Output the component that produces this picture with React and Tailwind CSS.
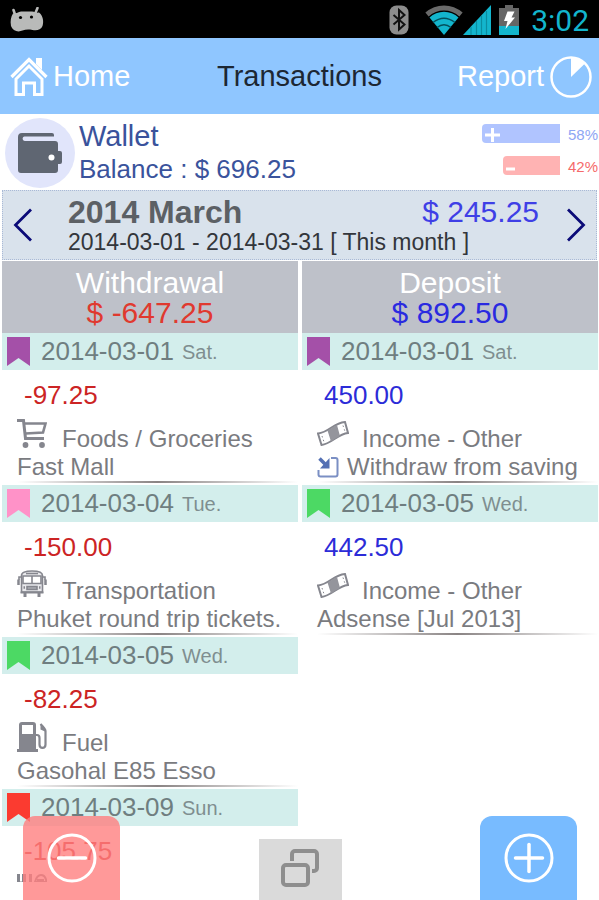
import clsx from 'clsx';

const wallet = {
    name: 'Wallet',
    balance: '$ 696.25',
    income: 58,
    expense: 42,
};

const columns = [
    {
        title: 'Withdrawal',
        total: '$ -647.25',
        totalClass: 'text-[#e0392f]',
        amountClass: 'text-[#cc2424]',
        items: [
            { date: '2014-03-01', day: 'Sat.', flag: '#a450a8', amount: '-97.25', icon: CartIcon, category: 'Foods / Groceries', note: 'Fast Mall' },
            { date: '2014-03-04', day: 'Tue.', flag: '#ff92c8', amount: '-150.00', icon: BusIcon, category: 'Transportation', note: 'Phuket round trip tickets.' },
            { date: '2014-03-05', day: 'Wed.', flag: '#4cd964', amount: '-82.25', icon: FuelIcon, category: 'Fuel', note: 'Gasohal E85 Esso' },
            { date: '2014-03-09', day: 'Sun.', flag: '#fb3b30', amount: '-105.75', icon: DiningIcon },
        ],
    },
    {
        title: 'Deposit',
        total: '$ 892.50',
        totalClass: 'text-[#2a2ae0]',
        amountClass: 'text-[#2c2cd8]',
        items: [
            { date: '2014-03-01', day: 'Sat.', flag: '#a450a8', amount: '450.00', icon: CashIcon, category: 'Income - Other', note: 'Withdraw from saving', transfer: true },
            { date: '2014-03-05', day: 'Wed.', flag: '#4cd964', amount: '442.50', icon: CashIcon, category: 'Income - Other', note: 'Adsense [Jul 2013]' },
        ],
    },
];

/* Icons */

function AndroidIcon() {
    return (
        <svg viewBox="0 0 34 26" className="h-[26px] w-[34px]" fill="#b9bab9">
            <path d="M3.500 3l2 6M27.500 1l-2.500 6" stroke="#b9bab9" strokeWidth="2.600" strokeLinecap="round" />
            <path d="M3 6.500c3 .5 5-1.500 8-2h11c3 .5 5 1.500 7 1 4 3 5 9 3.500 13.500-1.500 4-6 5-10 4-4-.8-7-.6-10 .6C8 25.500 2.500 24 1 19 0 14 1 9.500 3 6.500z" />
            <circle cx="10.500" cy="10.500" r="1.600" fill="#000" />
            <circle cx="21.500" cy="10" r="1.600" fill="#000" />
        </svg>
    );
}

function BluetoothIcon() {
    return (
        <svg viewBox="0 0 20 30" className="h-[30px] w-5">
            <rect x="0.500" y="0.500" width="19" height="29" rx="7" fill="#8d8d8d" />
            <path d="M4.500 10l11 9.500-5.500 5V5l5.500 5-11 9.500" fill="none" stroke="#111" strokeWidth="2" />
        </svg>
    );
}

function WifiIcon() {
    return (
        <svg viewBox="0 0 38 30" className="h-[30px] w-[38px]" fill="none">
            <path d="M2 9.500C12 .8 26 .8 36 9.500" stroke="#6a6a6a" strokeWidth="5" />
            <path d="M4.500 12.500a21 21 0 0 1 29 0L19 30z" fill="#13b5cd" />
            <path d="M8 17.500c7-5.500 15-5.500 22 0M12 22.500c4.500-3.500 9.500-3.500 14 0" stroke="#04505c" strokeWidth="1.500" />
        </svg>
    );
}

function SignalIcon() {
    return (
        <svg viewBox="0 0 28 30" className="h-[30px] w-7">
            <path d="M28 0v30H0z" fill="#13b5cd" />
            <path d="M8 22v8M13.500 16v14M18.500 11v19M23.500 6v24" stroke="#0a8da0" strokeWidth="1.200" />
        </svg>
    );
}

function BatteryIcon() {
    return (
        <svg viewBox="0 0 20 30" className="h-[30px] w-5">
            <path d="M6 0h8v3h6v18H0V3h6z" fill="#666" />
            <path d="M0 21h20v9H0z" fill="#13b5cd" />
            <path d="M8.500 6.500h7l-3 6h3.500L6.500 24l2-8H5z" fill="#fff" />
        </svg>
    );
}

function HouseIcon() {
    return (
        <svg viewBox="0 0 38 40" className="h-10 w-[38px]" fill="none" stroke="#fff" strokeWidth="3">
            <path d="M1.500 20L19 2.500 36.500 20" strokeWidth="3.200" />
            <path d="M6 22L19 9l13 13v15.500h-7.500V26h-11v11.500H6z" />
            <path d="M26 1h6v12l-6-6z" fill="#fff" stroke="none" />
        </svg>
    );
}

function PieIcon() {
    return (
        <svg viewBox="0 0 42 42" className="size-[42px]">
            <circle cx="21" cy="21" r="19.500" fill="none" stroke="#fff" strokeWidth="2.500" />
            <path d="M21 21V2a19 19 0 0 1 14 5.500z" fill="#fff" />
        </svg>
    );
}

function WalletIcon() {
    return (
        <svg viewBox="0 0 46 42" className="h-[42px] w-[46px]">
            <path d="M5 1h30a2 2 0 0 1 2 2v1.500H7.500C5 4.500 5 9 8 9h30a3 3 0 0 1 3 3v7h2a2 2 0 0 1 2 2v9a2 2 0 0 1-2 2h-2v6a3 3 0 0 1-3 3H4a3 3 0 0 1-3-3V5a4 4 0 0 1 4-4z" fill="#5f6672" />
            <circle cx="34.500" cy="25.500" r="3" fill="#fff" />
        </svg>
    );
}

function BookmarkIcon({ color }) {
    return (
        <svg viewBox="0 0 23 29" className="h-[29px] w-[23px]">
            <path d="M0 0h23v29l-11.500-8L0 29z" fill={color} />
        </svg>
    );
}

function CartIcon() {
    return (
        <svg viewBox="0 0 30 30" className="size-[30px]" fill="none" stroke="#85868e">
            <path d="M0 2.500h6.500L8.500 20.500H27" strokeWidth="3" />
            <path d="M7 5.500h21.500L26 14.500 8.500 15.500" strokeWidth="2.600" />
            <circle cx="8.500" cy="27" r="2.900" fill="#85868e" stroke="none" />
            <circle cx="25" cy="27" r="2.900" fill="#85868e" stroke="none" />
        </svg>
    );
}

function BusIcon() {
    return (
        <svg viewBox="0 0 30 30" className="size-[30px]" fill="none" stroke="#85868e" strokeWidth="1.600">
            <path d="M4.500 22V5.500C4.500 2.500 8 1 15 1s10.500 1.500 10.500 4.500V22z" fill="#e9e9ec" />
            <path d="M6 6h18v7.500H6zM15 6v7.500" fill="#fff" />
            <path d="M9 3.500h12" />
            <path d="M10 16.500h10v3H10z" fill="#a9aab1" />
            <path d="M6.500 17.500H8M22 17.500h1.500" strokeWidth="2.500" />
            <path d="M3.500 22.500h23" strokeWidth="2" />
            <path d="M8 23v4M22 23v4" strokeWidth="3" />
            <path d="M4.500 7H2v3M25.500 7H28v3" />
            <path d="M1.500 9.500V15M28.500 9.500V15" strokeWidth="2.500" />
        </svg>
    );
}

function FuelIcon() {
    return (
        <svg viewBox="0 0 30 30" className="size-[30px]">
            <path fillRule="evenodd" d="M2 3a3 3 0 0 1 3-3h11a3 3 0 0 1 3 3v24h2v3H0v-3h2zM5 3v9h11V3z" fill="#85868e" />
            <path d="M19 13h1c2 0 2.500 1 2.500 3v6.500c0 4.500 6 4.500 6 0V9c0-2-1.500-3.500-5-7" fill="none" stroke="#85868e" strokeWidth="2.200" />
            <path d="M23.500 2v5.500l4.500 2V6.500z" fill="#85868e" />
        </svg>
    );
}

function DiningIcon() {
    return (
        <svg viewBox="0 0 30 30" className="size-[30px]" fill="none" stroke="#85868e" strokeWidth="3">
            <path d="M1.500 0v9h6V0M6.500 0v29M13.500 0v29" />
            <path d="M18 8c1-4 3-7 6-7s5 3 5.500 7zM20 6h7" strokeWidth="2" />
        </svg>
    );
}

function CashIcon() {
    return (
        <svg viewBox="0 0 32 30" className="h-[30px] w-8 shrink-0" fill="none" stroke="#85868e" strokeWidth="2">
            <path d="M1 15.500c5-.5 9-3 13.500-6S23 4.500 28 4l3 11c-5 .5-9 3-13.500 6S9 26.500 4.500 27z" />
            <path d="M10.500 12.500c3.500-2 6-4 9.500-5.500l3 11c-3 1.500-6 3.500-9 5.500z" fill="#94959c" stroke="none" />
            <path d="M5 18l2 6M26 7.500l2 6" strokeWidth="1" strokeDasharray="1.500 2.500" />
        </svg>
    );
}

function TransferIcon() {
    return (
        <svg viewBox="0 0 22 22" className="size-[22px] shrink-0" fill="none" stroke="#5470b4" strokeWidth="2">
            <path d="M14 2h4.500a2 2 0 0 1 2 2v14.500a2 2 0 0 1-2 2h-15a2 2 0 0 1-2-2V14" stroke="#7b8fc4" />
            <path d="M2.500 2.500l6 6" strokeWidth="3.500" />
            <path d="M12.500 2v10.500H3z" fill="#5470b4" stroke="none" />
        </svg>
    );
}

function ChevronIcon({ flip }) {
    return (
        <svg viewBox="0 0 20 34" className={clsx('h-[34px] w-5', flip && 'rotate-180')} fill="none">
            <path d="M18 1.500L2.500 17 18 32.500" stroke="#0b0b78" strokeWidth="2.800" />
        </svg>
    );
}

function WindowsIcon() {
    return (
        <svg viewBox="0 0 38 38" className="size-[38px]" fill="none" stroke="#8e8e8e" strokeWidth="4">
            <path d="M11 12V5a3 3 0 0 1 3-3h19a3 3 0 0 1 3 3v14a3 3 0 0 1-3 3h-2" />
            <rect x="2" y="16" width="25" height="20" rx="3" />
        </svg>
    );
}

function RoundIcon({ plus }) {
    return (
        <svg viewBox="0 0 50 50" className="size-[50px]" fill="none" stroke="#fff" strokeWidth="3.500" strokeLinecap="round">
            <circle cx="25" cy="25" r="23" strokeWidth="3" />
            <path d="M11.500 25h27" />
            {plus && <path d="M25 11.500v27" />}
        </svg>
    );
}

/* Sections */

const StatusBar = () => (
    <div className="flex h-[38px] shrink-0 items-center bg-black px-[10px] pt-[2px]">
        <AndroidIcon />
        <div className="ml-auto flex items-center">
            <BluetoothIcon />
            <div className="ml-4 flex items-center">
                <WifiIcon />
                <SignalIcon />
            </div>
            <div className="ml-2">
                <BatteryIcon />
            </div>
            <span className="ml-3 pt-[2px] font-['Roboto',sans-serif] text-[30px] leading-9 text-[#13b5cd]">3:02</span>
        </div>
    </div>
);

const Header = () => (
    <header className="grid h-[76px] shrink-0 grid-cols-[1fr_auto_1fr] items-center bg-[#8fc6ff] px-[7px] pt-[2px] text-[29px]">
        <a href="#home" className="flex items-center gap-[5px] justify-self-start pl-[3px] text-white">
            <HouseIcon />
            <span>Home</span>
        </a>
        <h1 className="text-[#1c2733]">Transactions</h1>
        <a href="#report" className="flex items-center gap-[6px] justify-self-end text-white">
            <span>Report</span>
            <PieIcon />
        </a>
    </header>
);

const RatioBar = ({ percent, sign, barClass, textClass }) => (
    <div className="flex items-center gap-2">
        <div className="flex w-[135px] justify-end">
            <div className={clsx('flex h-[19px] items-center rounded-l-sm pl-[3px]', barClass)} style={{ width: `${percent}%` }}>
                <svg viewBox="0 0 16 16" className="size-4" stroke="#fff" strokeWidth="3">
                    {sign === '+' ? <path d="M0 9h15M7.500 2v14" /> : <path d="M0 11h9" />}
                </svg>
            </div>
        </div>
        <span className={clsx('w-[30px] pt-[3px] text-[15px] leading-4', textClass)}>{percent}%</span>
    </div>
);

const WalletSummary = () => (
    <section className="flex h-[76px] shrink-0 items-center pt-[2px] pr-px pl-[5px] text-[#3a539c]">
        <div className="flex size-[70px] items-center justify-center rounded-full bg-[#e1e5fb]">
            <WalletIcon />
        </div>
        <div className="ml-1 flex-1 leading-[33px]">
            <h2 className="text-[29px]">{wallet.name}</h2>
            <p className="text-[26px]">Balance : {wallet.balance}</p>
        </div>
        <div className="flex flex-col gap-[13px] pb-[7px]">
            <RatioBar percent={wallet.income} sign="+" barClass="bg-[#b0c4ff]" textClass="text-[#8ea6f4]" />
            <RatioBar percent={wallet.expense} sign="-" barClass="bg-[#ffb3b3]" textClass="text-[#f56a6a]" />
        </div>
    </section>
);

const MonthBar = () => (
    <section className="mx-[2px] flex h-[70px] shrink-0 items-center border border-dotted border-[#a9b9d6] bg-[#d9e2ec] px-[10px]">
        <button type="button" aria-label="Previous month">
            <ChevronIcon />
        </button>
        <div className="ml-[35px] flex-1 pt-[2px]">
            <div className="flex items-center justify-between pr-[27px] text-[30px] leading-8">
                <h2 className="text-[32px] font-bold text-[#5c6065]">2014 March</h2>
                <span className="text-[#3f3fe6]">$ 245.25</span>
            </div>
            <p className="text-[23px] leading-[29px] text-[#33363b]">2014-03-01 - 2014-03-31 [ This month ]</p>
        </div>
        <button type="button" aria-label="Next month">
            <ChevronIcon flip />
        </button>
    </section>
);

const Transaction = ({ item, amountClass }) => (
    <li>
        <div className="flex h-[37px] items-center bg-[#d3eeec] pl-[5px]">
            <BookmarkIcon color={item.flag} />
            <span className="ml-[11px] text-[26px] text-[#6f7e80]">{item.date}</span>
            <span className="ml-2 text-xl text-[#7f8e90]">{item.day}</span>
        </div>
        <div className="pt-2 pb-[2px] pl-[15px] text-[24px] leading-7 text-[#7a7b7f]">
            <p className={clsx('pl-[7px] text-[26px] leading-[34px]', amountClass)}>{item.amount}</p>
            <div className="mt-[6px] flex h-[35px] items-end">
                <div className="flex w-[45px] shrink-0 self-start">
                    <item.icon />
                </div>
                <span>{item.category}</span>
            </div>
            <p className="flex h-7 items-center gap-2 whitespace-nowrap">
                {item.transfer && <TransferIcon />}
                {item.note}
            </p>
            <div className="h-[2px] bg-linear-to-r from-transparent via-[#8a8484] to-transparent" />
        </div>
    </li>
);

const Column = ({ column }) => (
    <section>
        <header className="bg-[#bec1c9] pt-[7px] pb-[5px] text-center text-[30px] leading-[30px]">
            <h3 className="text-white">{column.title}</h3>
            <p className={column.totalClass}>{column.total}</p>
        </header>
        <ul>
            {column.items.map((item) => (
                <Transaction key={item.date} item={item} amountClass={column.amountClass} />
            ))}
        </ul>
    </section>
);

const BottomBar = () => (
    <nav className="absolute inset-x-0 bottom-0 flex items-end justify-between pr-[22px] pl-[23px]">
        <button type="button" aria-label="Add withdrawal" className="flex h-[84px] w-[97px] items-center justify-center rounded-t-xl bg-[#ff7f7f]/80">
            <RoundIcon />
        </button>
        <button type="button" aria-label="Switch view" className="flex h-[61px] w-[83px] items-center justify-center bg-[#dadada] pb-1">
            <WindowsIcon />
        </button>
        <button type="button" aria-label="Add deposit" className="flex h-[84px] w-[97px] items-center justify-center rounded-t-xl bg-[#78bbff]">
            <RoundIcon plus />
        </button>
    </nav>
);

const App = () => (
    <div className="relative flex h-screen flex-col bg-white font-['Liberation_Sans',Arial,sans-serif]">
        <StatusBar />
        <Header />
        <WalletSummary />
        <MonthBar />
        <main className="mt-px mb-[18px] grid min-h-0 flex-1 grid-cols-2 gap-1 overflow-y-auto pr-px pl-[2px] [scrollbar-width:none]">
            {columns.map((column) => (
                <Column key={column.title} column={column} />
            ))}
        </main>
        <BottomBar />
    </div>
);

export default App;
